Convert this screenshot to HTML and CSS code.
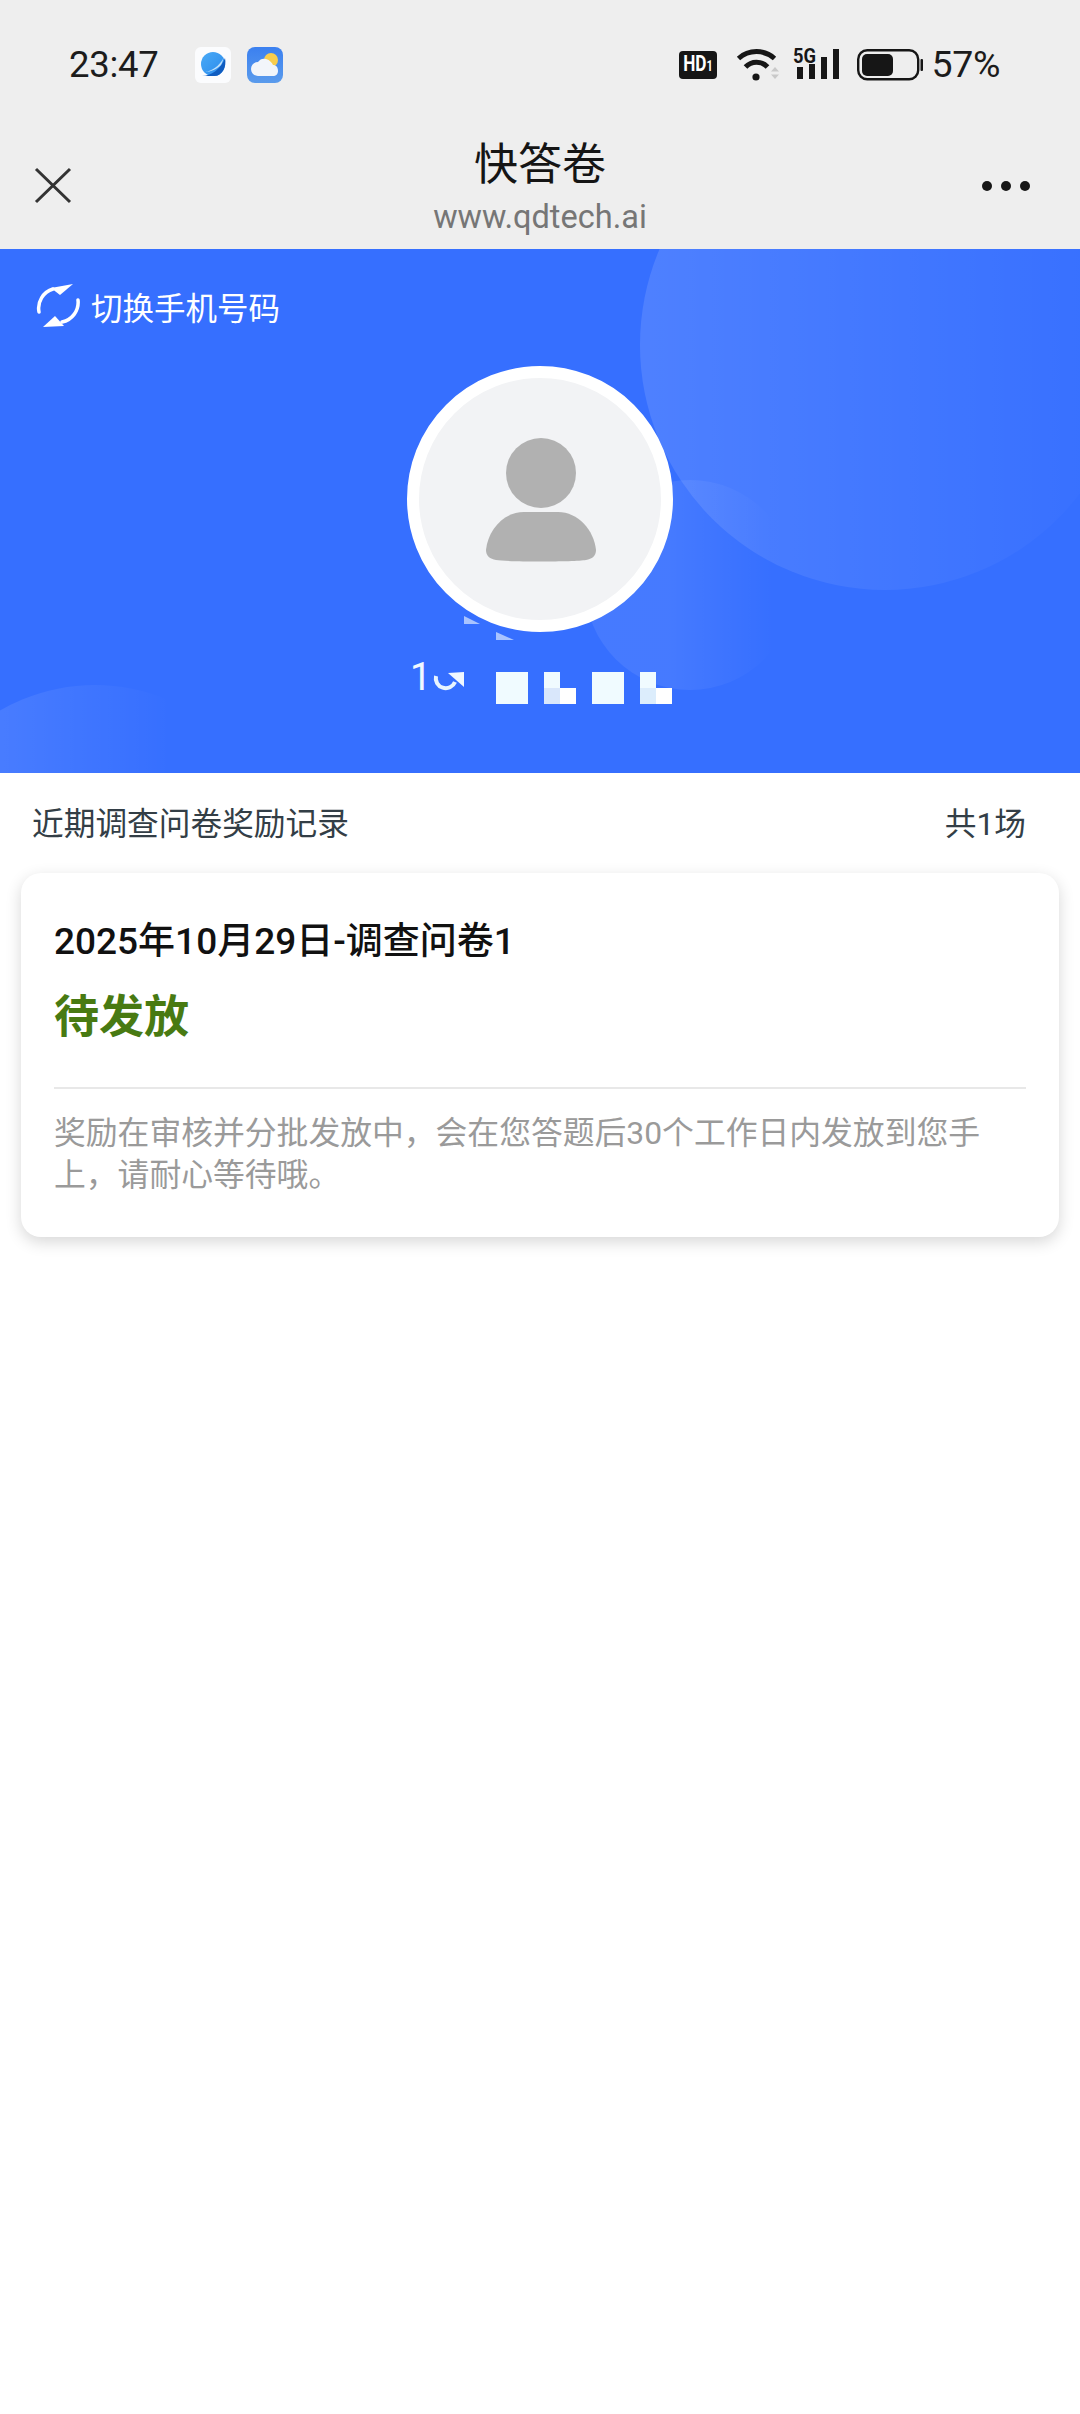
FILE: index.html
```html
<!doctype html>
<html lang="zh-CN">
<head>
	<meta charset="utf-8">
	<meta name="viewport" content="width=device-width, user-scalable=no">
	<title>快答卷</title>
	<link rel="stylesheet" href="styles.css">
</head>
<body>
	<div class="top">
		<div class="status">
			<span class="time">23:47</span>
			<svg class="app-ico" width="36" height="36" viewBox="0 0 36 36">
				<defs>
					<linearGradient id="planet" x1="0" y1="0" x2="1" y2="1">
						<stop offset="0" stop-color="#4aaaf6"/>
						<stop offset="1" stop-color="#2a8aec"/>
					</linearGradient>
				</defs>
				<rect width="36" height="36" rx="6" fill="#fbfcfe"/>
				<circle cx="18" cy="17" r="12" fill="url(#planet)"/>
				<path d="M7 29C16 29 26 22 30 11C32 20 27 30 18 29Z" fill="#0f5cc0"/>
				<path d="M10 25C17 24 24 19 28 12C28 14 27 16 26 18C22 22 16 25 10 25Z" fill="#bfe0fb"/>
			</svg>
			<svg class="app-ico app-ico-weather" width="36" height="36" viewBox="0 0 36 36">
				<defs>
					<linearGradient id="sky" x1="0" y1="0" x2="0" y2="1">
						<stop offset="0" stop-color="#3b80f0"/>
						<stop offset="1" stop-color="#5a9bec"/>
					</linearGradient>
				</defs>
				<rect width="36" height="36" rx="8" fill="url(#sky)"/>
				<circle cx="24" cy="13" r="7" fill="#f8cd4e"/>
				<path d="M11 29C7 29 4 26 4 22C4 18 7 15 11 15C13 12 16 11 19 12C23 13 25 16 26 18C29 18 31 20 31 24C31 27 29 29 26 29Z" fill="#f2f5fa"/>
			</svg>
			<span class="status-gap"></span>
			<span class="hd"><span class="hd-text">HD<small>1</small></span></span>
			<svg class="wifi" width="44" height="34" viewBox="0 0 44 34">
				<path d="M2.500 11.500A27 27 0 0 1 38.500 11.500" fill="none" stroke="#161616" stroke-width="5"/>
				<path d="M9.500 20A15 15 0 0 1 31.500 20" fill="none" stroke="#161616" stroke-width="5"/>
				<circle cx="20" cy="30" r="3.600" fill="#161616"/>
				<path d="M39 20l4 4.500h-8zM39 32l4-4.500h-8z" fill="#c9c9c9"/>
			</svg>
			<svg class="signal" width="47" height="36" viewBox="0 -3 47 36">
				<text x="0" y="15.500" class="five-g" textLength="23" lengthAdjust="spacingAndGlyphs">5G</text>
				<rect x="4" y="20" width="6" height="12" fill="#161616"/>
				<rect x="16" y="17" width="6" height="15" fill="#161616"/>
				<rect x="28" y="10" width="6" height="22" fill="#161616"/>
				<rect x="40" y="2" width="6" height="30" fill="#161616"/>
			</svg>
			<svg class="battery" width="66" height="32" viewBox="0 0 66 32">
				<rect x="1.200" y="1.200" width="60" height="29" rx="9" fill="none" stroke="#161616" stroke-width="2.400"/>
				<rect x="5" y="5" width="31" height="22" rx="5" fill="#161616"/>
				<rect x="63.500" y="10" width="2.500" height="12" rx="1" fill="#161616"/>
			</svg>
			<span class="pct">57%</span>
		</div>
		<div class="nav">
			<svg class="close" width="38" height="37" viewBox="0 0 38 37">
				<path d="M2 2L36 35M36 2L2 35" fill="none" stroke="#333" stroke-width="3"/>
			</svg>
			<div class="nav-title">
				<div class="nav-name">快答卷</div>
				<div class="nav-url">www.qdtech.ai</div>
			</div>
			<div class="more"><i></i><i></i><i></i></div>
		</div>
	</div>

	<div class="hero">
		<div class="glow glow-big"></div>
		<div class="glow glow-mid"></div>
		<div class="glow glow-low"></div>
		<div class="switch">
			<svg width="44" height="45" viewBox="16 13 44 45">
				<path d="M19 42A20 20 0 0 1 33 19" fill="none" stroke="#fff" stroke-width="3.500" stroke-linecap="round"/>
				<path d="M31 18L53 14L40 25Z" fill="#fff"/>
				<path d="M58 30A20 20 0 0 1 42 52" fill="none" stroke="#fff" stroke-width="3.500" stroke-linecap="round"/>
				<path d="M23 57L44 56L35 46Z" fill="#fff"/>
			</svg>
			<span>切换手机号码</span>
		</div>
		<div class="avatar">
			<svg width="110" height="128" viewBox="0 0 110 128">
				<circle cx="55" cy="35" r="35" fill="#b1b1b1"/>
				<path d="M38 74H72C92 74 108 92 110 112C110 118 106 121 100 122C88 124 22 124 10 122C4 121 0 118 0 112C2 92 18 74 38 74Z" fill="#b1b1b1"/>
			</svg>
		</div>
		<svg class="masked" width="264" height="88" viewBox="-4 0 264 88">
			<text x="-2" y="74" class="masked-digit">1</text>
			<path d="M24 60A10 10 0 0 0 43 66" fill="none" stroke="#e8f4ff" stroke-width="4"/>
			<path d="M36 57L52 56V71Z" fill="#f0f8ff"/>
			<path d="M52 0V8H68Z" fill="#a9c4ff"/>
			<path d="M84 16V24H102Z" fill="#a9c4ff"/>
			<rect x="84" y="56" width="32" height="32" fill="#f0fbff"/>
			<rect x="132" y="56" width="16" height="16" fill="#f0fbff"/>
			<rect x="132" y="72" width="16" height="16" fill="#d9e7fb"/>
			<rect x="148" y="72" width="16" height="16" fill="#fff"/>
			<rect x="180" y="56" width="32" height="32" fill="#f0fbff"/>
			<rect x="228" y="56" width="16" height="16" fill="#f0fbff"/>
			<rect x="228" y="72" width="16" height="16" fill="#dcedfc"/>
			<rect x="244" y="72" width="16" height="16" fill="#fff"/>
		</svg>
	</div>

	<div class="list-head">
		<span>近期调查问卷奖励记录</span>
		<span>共1场</span>
	</div>

	<div class="card">
		<div class="card-title">2025年10月29日-调查问卷1</div>
		<div class="card-state">待发放</div>
		<div class="card-line"></div>
		<p class="card-note">奖励在审核并分批发放中，会在您答题后30个工作日内发放到您手上，请耐心等待哦。</p>
	</div>
</body>
</html>
```

FILE: styles.css
```css
html,body{margin:0;background:#fff}
body{width:1080px;height:2414px;overflow:hidden;font-family:Roboto,"Noto Sans CJK SC",sans-serif;color:#111}
svg{display:block;flex:none}

.top{height:249px;background:#eee}
.status{display:flex;align-items:center;height:128px;padding:0 80px 0 69px;box-sizing:border-box}
.time{font-size:36.500px;letter-spacing:-.3px;color:#1c1c1c;margin-right:37px}
.app-ico{margin-top:1px}
.app-ico-weather{margin-left:16px}
.status-gap{flex:1}
.hd{display:flex;align-items:center;justify-content:center;width:38px;height:28px;margin-top:2px;border-radius:4px;background:#161616}
.hd-text{font-size:22px;font-weight:700;line-height:28px;color:#fff;transform:scaleX(.78);white-space:nowrap}
.hd-text small{font-size:14px}
.wifi{margin:-1px 0 0 19px}
.signal{margin:-4px 0 0 13px}
.battery{margin:1px 0 0 17px}
.pct{font-size:37.500px;letter-spacing:-.4px;color:#1c1c1c;margin-left:9px}
.five-g{font:bold 20px Roboto,sans-serif;fill:#161616}

.nav{display:grid;grid-template-columns:1fr auto 1fr;align-items:center;height:115px;padding:0 50px}
.close{margin-left:-16px}
.nav-title{text-align:center;margin-top:4px}
.nav-name{font-size:44px;line-height:50px;color:#151515}
.nav-url{font-size:32.500px;line-height:36px;margin-top:9px;color:#767676}
.more{display:flex;gap:9px;justify-self:end}
.more i{width:10px;height:10px;border-radius:50%;background:#161616}

.hero{position:relative;display:flex;flex-direction:column;align-items:center;height:524px;padding-top:34px;box-sizing:border-box;overflow:hidden;background:#366fff}
.glow{position:absolute;border-radius:50%;background:linear-gradient(to right,rgba(255,255,255,.12),rgba(255,255,255,0))}
.glow-big{left:640px;top:-149px;width:490px;height:490px}
.glow-mid{left:585px;top:231px;width:210px;height:210px;background:linear-gradient(to right,rgba(255,255,255,.08) 40%,rgba(255,255,255,0) 90%)}
.glow-low{left:-95px;top:436px;width:380px;height:380px;background:linear-gradient(to right,rgba(255,255,255,.1) 20%,rgba(255,255,255,0) 70%)}
.switch{position:relative;align-self:flex-start;display:flex;align-items:center;gap:11px;margin-left:36px;height:45px;font-size:31.500px;color:#fff}
.avatar{position:relative;z-index:1;display:flex;justify-content:center;width:266px;height:266px;margin-top:38px;padding:72px 0 0 2px;box-sizing:border-box;border:12px solid #fff;border-radius:50%;background:#f2f3f5}
.avatar svg{margin-top:-12px}
.masked{position:relative;margin-top:-16px}
.masked-digit{font:400 38px Roboto,sans-serif;fill:#f0f8ff}

.list-head{display:flex;justify-content:space-between;padding:30px 54px 0 32px;font-size:31.700px;line-height:44px;color:#333e46}

.card{margin:26px 21px 0;padding:44px 33px 41px;border-radius:20px;background:#fff;box-shadow:0 5px 16px rgba(0,0,0,.16)}
.card-title{font-size:37px;font-weight:500;line-height:50px;color:#111}
.card-state{margin-top:23px;font-size:45px;font-weight:700;line-height:56px;color:#487a12}
.card-line{height:2px;margin-top:41px;background:#e8e8e8}
.card-note{margin:23px 0 0;font-size:31.800px;line-height:42px;color:#9a9a9a}
```
